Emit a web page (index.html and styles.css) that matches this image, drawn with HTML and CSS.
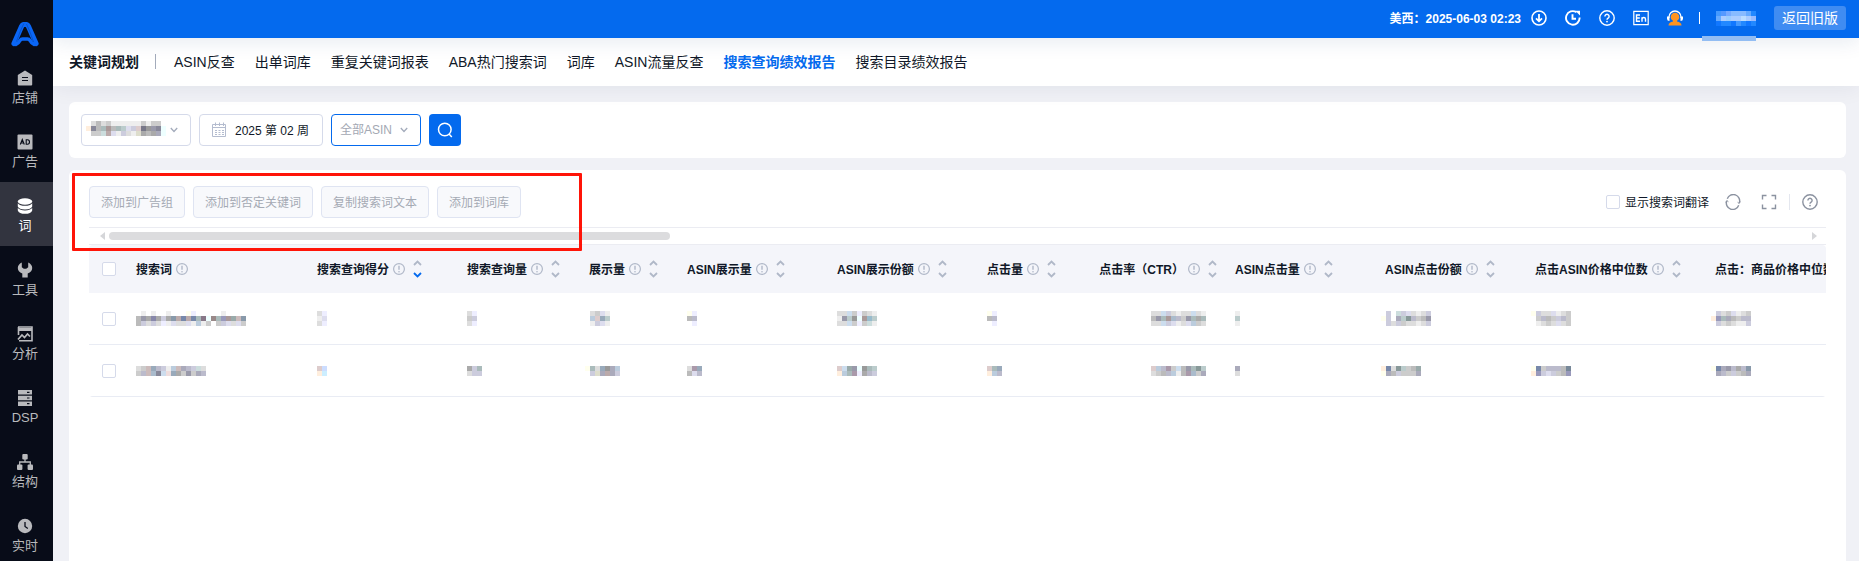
FILE: index.html
```html
<!DOCTYPE html>
<html lang="zh-CN">
<head>
    <meta charset="UTF-8">
    <meta name="viewport" content="width=device-width, initial-scale=1.0">
    <title>搜索查询绩效报告</title>
    <link rel="stylesheet" href="styles.css">
</head>
<body>

<svg class="sprite" aria-hidden="true">
    <symbol id="i-info" viewBox="0 0 12 12">
        <circle cx="6" cy="6" r="5.4" fill="none" stroke="currentColor" stroke-width="1.200"/>
        <path d="M6 2.800v4" stroke="currentColor" stroke-width="1.400"/>
        <circle cx="6" cy="8.700" r=".8" fill="currentColor"/>
    </symbol>
    <symbol id="i-sort" viewBox="0 0 9 18">
        <path class="up" d="M1 5l3.500-3.500L8 5" fill="none" stroke="currentColor" stroke-width="1.800"/>
        <path class="down" d="M1 13l3.500 3.500L8 13" fill="none" stroke="var(--down, currentColor)" stroke-width="1.800"/>
    </symbol>
    <symbol id="i-chevron" viewBox="0 0 8 6">
        <path d="M.8 1L4 4.500L7.200 1" fill="none" stroke="currentColor" stroke-width="1.300"/>
    </symbol>
    <symbol id="i-help" viewBox="0 0 16 16">
        <circle cx="8" cy="8" r="7.200" fill="none" stroke="currentColor" stroke-width="1.400"/>
        <path d="M5.900 6.400a2.100 2.100 0 1 1 3.200 1.800c-.8.500-1.100.8-1.100 1.500" fill="none" stroke="currentColor" stroke-width="1.400"/>
        <circle cx="8" cy="11.600" r=".9" fill="currentColor"/>
    </symbol>
</svg>

<aside class="sidebar">
    <a class="logo" href="#" aria-label="首页">
        <svg width="28" height="25" viewBox="0 0 28 25">
            <path d="M3 21.500L10.500 4.500Q11.500 2.500 13 2.500H15Q16.500 2.500 17.500 4.500L25 21.500" fill="none" stroke="#0a66f5" stroke-width="5.200" stroke-linejoin="round" stroke-linecap="round"/>
            <path d="M5 22.500Q7.500 21.500 9 18.500Q10 17 11.500 17H16.500Q18 17 19 18.500Q20.500 21.500 23 22.500" fill="none" stroke="#0a66f5" stroke-width="3.400" stroke-linecap="round"/>
            <path d="M12.800 1.500Q9 9 5.500 19.500M15.500 2Q19 9 22.500 20" fill="none" stroke="#0649b8" stroke-width=".7"/>
        </svg>
    </a>
    <nav class="menu">
        <a class="menu-item" href="#">
            <svg width="16" height="16" viewBox="0 0 16 16"><path d="M.8 5L8 .5 15.200 5v9.500q0 1-1 1H1.800q-1 0-1-1z" fill="currentColor"/><path d="M5 7.500h6M5 10.500h6" stroke="#080c18" stroke-width="1.200"/></svg>
            <span>店铺</span>
        </a>
        <a class="menu-item" href="#">
            <svg width="16" height="16" viewBox="0 0 16 16"><rect x=".5" y=".5" width="15" height="15" rx="1" fill="currentColor"/><path d="M3.300 10.500L5.300 5.500l2 5M4 9h2.600M9.200 5.800v4.400h1.300q2 0 2-2.200t-2-2.200z" fill="none" stroke="#080c18" stroke-width="1.100"/></svg>
            <span>广告</span>
        </a>
        <a class="menu-item active" href="#">
            <svg width="16" height="16" viewBox="0 0 16 16"><ellipse cx="8" cy="3.500" rx="7.200" ry="3.300" fill="currentColor"/><path d="M.8 5.200Q3 7.800 8 7.800t7.200-2.600v3.300Q14 11.400 8 11.400T.8 8.500zM.8 10Q3 12.400 8 12.400t7.200-2.400v2.400Q14 15.800 8 15.800T.8 12.400z" fill="currentColor"/></svg>
            <span>词</span>
        </a>
        <a class="menu-item" href="#">
            <svg width="16" height="16" viewBox="0 0 16 16"><path d="M4.800.5v4.700l2 1.600h2.400l2-1.600V.5q4 2 4 5.500 0 3.500-4.500 5.500v4H5.300v-4Q.8 9.500.8 6q0-3.500 4-5.500z" fill="currentColor"/></svg>
            <span>工具</span>
        </a>
        <a class="menu-item" href="#">
            <svg width="16" height="16" viewBox="0 0 16 16"><path d="M1 1h14v13.800H2M1.500 1v8" fill="none" stroke="currentColor" stroke-width="1.600"/><path d="M1 3.500h14" stroke="currentColor" stroke-width="3"/><path d="M1 13.500l4-4.500 2.500 2.500L10.500 8l2.500 2.500" fill="none" stroke="currentColor" stroke-width="1.700"/></svg>
            <span>分析</span>
        </a>
        <a class="menu-item" href="#">
            <svg width="16" height="16" viewBox="0 0 16 16"><path d="M1 0h14v4.600H1zM1 5.700h14v4.600H1zM1 11.400h14V16H1z" fill="currentColor"/><path d="M10 2.300h2.500M10 8h2.500M10 13.700h2.500" stroke="#080c18" stroke-width="1.200"/></svg>
            <span>DSP</span>
        </a>
        <a class="menu-item" href="#">
            <svg width="16" height="16" viewBox="0 0 16 16"><rect x="5.300" y="0" width="5.400" height="5.500" rx="1" fill="currentColor"/><rect x="0" y="10.500" width="5.400" height="5.500" rx="1" fill="currentColor"/><rect x="10.600" y="10.500" width="5.400" height="5.500" rx="1" fill="currentColor"/><path d="M8 5v3M2.700 11V8h10.600v3" fill="none" stroke="currentColor" stroke-width="1.300"/></svg>
            <span>结构</span>
        </a>
        <a class="menu-item" href="#">
            <svg width="16" height="16" viewBox="0 0 16 16"><circle cx="8" cy="8" r="7.200" fill="currentColor"/><path d="M8 4v4.500l2.800 2" fill="none" stroke="#080c18" stroke-width="1.300"/></svg>
            <span>实时</span>
        </a>
    </nav>
</aside>

<div class="page">
    <header class="topbar">
        <span class="clock">美西：2025-06-03 02:23</span>
        <div class="top-icons">
            <button aria-label="下载">
                <svg width="16" height="16" viewBox="0 0 16 16" fill="none" stroke="#fff" stroke-width="1.600"><circle cx="8" cy="8" r="7"/><path d="M8 4v7M5 8.300l3 3 3-3" stroke-width="1.800"/></svg>
            </button>
            <button aria-label="更新记录">
                <svg width="16" height="16" viewBox="0 0 16 16" fill="none" stroke="#fff" stroke-width="1.900"><path d="M14.600 7.500A6.800 6.800 0 1 1 11.500 2.200"/><path d="M7.500 4.200v4.600h3.500"/><path d="M10.200.8h4.800v4.800z" fill="#fff" stroke="none"/></svg>
            </button>
            <button aria-label="帮助"><svg width="16" height="16"><use href="#i-help"/></svg></button>
            <button aria-label="English">
                <svg width="16" height="16" viewBox="0 0 16 16" fill="none" stroke="#fff" stroke-width="1.200"><path d="M.8 1.300h14.400v13.400H.8z"/><path d="M7 5H3.500v6.300H7M3.500 8H6.800M9 11.800V7.200M9 9q.2-1.500 1.800-1.500T12.500 9v2.800" stroke-width="1.400"/></svg>
            </button>
            <button aria-label="客服">
                <svg width="16" height="16" viewBox="0 0 16 16"><path d="M2 8V7a6 6 0 0 1 12 0v1" fill="none" stroke="#fff" stroke-width="1.300"/><path d="M0 6.500h2.500V11Q0 11 0 8.800zM16 6.500h-2.500V11Q16 11 16 8.800z" fill="#fff"/><circle cx="8" cy="7" r="4.300" fill="#ff9420"/><path d="M6 10h4v1.500q4.500.8 4.500 4h-13q0-3.200 4.500-4z" fill="#ff9420"/></svg>
            </button>
        </div>
        <span class="divider"></span>
        <span class="user"><i class="mosaic" data-px="49f 59f 7af 8bf 8bf 8bf 6af 28f|6af acf 9cf acf acf bdf acf 9bf|17f 28f 28f 17f 49f 28f 17f 28f"></i></span>
        <button class="btn-old">返回旧版</button>
    </header>

    <nav class="tabs">
        <strong class="tabs-title">关键词规划</strong>
        <span class="tabs-line"></span>
        <a href="#">ASIN反查</a>
        <a href="#">出单词库</a>
        <a href="#">重复关键词报表</a>
        <a href="#">ABA热门搜索词</a>
        <a href="#">词库</a>
        <a href="#">ASIN流量反查</a>
        <a class="active" href="#">搜索查询绩效报告</a>
        <a href="#">搜索目录绩效报告</a>
    </nav>

    <main class="content">
        <form class="card filters">
            <div class="field field-shop">
                <select aria-label="店铺"><option></option></select>
                <i class="mosaic" data-px="... ddd bbb ddd ccc eee eee eee eee eee eee ccc eee ccc ccc ...|fed 889 bbb abb a99 bbb abb bcc dde ccd dcc 778 999 99a 889 eff|... ccc ccc cdd baa dde eee ccd ddd eee ddc aaa bbb aaa aab eff"></i>
                <svg class="chevron" width="8" height="6"><use href="#i-chevron"/></svg>
            </div>
            <div class="field field-date">
                <svg class="calendar" width="16" height="16" viewBox="0 0 16 16" fill="none" stroke="#b4bccf"><path d="M1.500 2.500h13v12h-13zM1.500 5.500h13M4.500.5v3.500M8.500.5v3.500M12.500.5v3.500"/><path d="M4 8.500h9M4 10.500h9M4 12.500h9" stroke-dasharray="2 1.500"/></svg>
                <input type="text" value="2025 第 02 周" aria-label="周" readonly>
            </div>
            <div class="field field-asin">
                <select aria-label="ASIN"><option>全部ASIN</option></select>
                <svg class="chevron" width="8" height="6"><use href="#i-chevron"/></svg>
            </div>
            <button class="btn-search" type="button" aria-label="搜索">
                <svg width="16" height="16" viewBox="0 0 16 16" fill="none" stroke="#fff" stroke-width="1.500"><circle cx="7.800" cy="7.500" r="6.300"/><path d="M12 12l2.800 3"/></svg>
            </button>
        </form>

        <section class="card report">
            <div class="toolbar">
                <button disabled>添加到广告组</button>
                <button disabled>添加到否定关键词</button>
                <button disabled>复制搜索词文本</button>
                <button disabled>添加到词库</button>
                <div class="tools">
                    <label class="translate"><input type="checkbox"><span>显示搜索词翻译</span></label>
                    <button class="tool" aria-label="刷新">
                        <svg width="16" height="16" viewBox="0 0 16 16" fill="none" stroke="currentColor" stroke-width="1.400"><path d="M2.300 4.800A6.300 6.300 0 0 1 14.300 9M13.700 11.200A6.300 6.300 0 0 1 1.700 7"/><path d="M.8 8.500l1-2 1.600 1.200M15.200 7.500l-1 2-1.600-1.200" stroke-width="1"/></svg>
                    </button>
                    <button class="tool" aria-label="全屏">
                        <svg width="16" height="16" viewBox="0 0 16 16" fill="none" stroke="currentColor" stroke-width="1.400"><path d="M1.500 5.500v-4h4M10.500 1.500h4v4M14.500 10.500v4h-4M5.500 14.500h-4v-4"/></svg>
                    </button>
                    <span class="tools-line"></span>
                    <button class="tool" aria-label="帮助"><svg width="16" height="16"><use href="#i-help"/></svg></button>
                </div>
            </div>

            <div class="scroller">
                <span class="arrow arrow-left"></span>
                <div class="track"><div class="thumb"></div></div>
                <span class="arrow arrow-right"></span>
            </div>

            <div class="table-wrap">
                <table>
                    <colgroup>
                        <col class="w-check"><col class="w-term"><col class="w-m"><col class="w-122"><col class="w-s"><col class="w-m"><col class="w-m"><col class="w-s"><col class="w-m"><col class="w-m"><col class="w-m"><col class="w-l"><col class="w-xl">
                    </colgroup>
                    <thead>
                        <tr>
                            <th class="check"><input type="checkbox" aria-label="全选"></th>
                            <th><div class="th"><span>搜索词</span><svg class="info"><use href="#i-info"/></svg></div></th>
                            <th><div class="th"><span>搜索查询得分</span><svg class="info"><use href="#i-info"/></svg><svg class="sort desc"><use href="#i-sort"/></svg></div></th>
                            <th><div class="th"><span>搜索查询量</span><svg class="info"><use href="#i-info"/></svg><svg class="sort"><use href="#i-sort"/></svg></div></th>
                            <th><div class="th"><span>展示量</span><svg class="info"><use href="#i-info"/></svg><svg class="sort"><use href="#i-sort"/></svg></div></th>
                            <th><div class="th"><span>ASIN展示量</span><svg class="info"><use href="#i-info"/></svg><svg class="sort"><use href="#i-sort"/></svg></div></th>
                            <th><div class="th"><span>ASIN展示份额</span><svg class="info"><use href="#i-info"/></svg><svg class="sort"><use href="#i-sort"/></svg></div></th>
                            <th><div class="th"><span>点击量</span><svg class="info"><use href="#i-info"/></svg><svg class="sort"><use href="#i-sort"/></svg></div></th>
                            <th class="right"><div class="th"><span>点击率（CTR）</span><svg class="info"><use href="#i-info"/></svg><svg class="sort"><use href="#i-sort"/></svg></div></th>
                            <th><div class="th"><span>ASIN点击量</span><svg class="info"><use href="#i-info"/></svg><svg class="sort"><use href="#i-sort"/></svg></div></th>
                            <th><div class="th"><span>ASIN点击份额</span><svg class="info"><use href="#i-info"/></svg><svg class="sort"><use href="#i-sort"/></svg></div></th>
                            <th><div class="th"><span>点击ASIN价格中位数</span><svg class="info"><use href="#i-info"/></svg><svg class="sort"><use href="#i-sort"/></svg></div></th>
                            <th><div class="th"><span>点击：商品价格中位数</span><svg class="info"><use href="#i-info"/></svg><svg class="sort"><use href="#i-sort"/></svg></div></th>
                        </tr>
                    </thead>
                    <tbody>
                        <tr>
                            <td class="check"><input type="checkbox" aria-label="选择第1行"></td>
                            <td><i class="mosaic" data-px="... eee ... eee ... ... eee ... ... ... ffe eef ... ... ... ... ... eee ... ... ... ...|bbb 99a aaa 88a aaa ccd aaa 89a baa 78a baa 78a abb 878 eff 988 abb 99b a99 9aa cbb 89a|bbb ccd ddd ccd ddd eef eee dde ddd ddd dde eee bcd eee ccc ... ccc ccd dde ddd dde ccc cdd"></i></td>
                            <td><i class="mosaic" data-px="ddd eef|eee dde|ddd eef"></i></td>
                            <td><i class="mosaic" data-px="ddd eef|ccc ccd|ddd eef"></i></td>
                            <td><i class="mosaic lead" data-px="... ddd ccc dde eee|fff bcd dcc 9ab bcc|... eee ccd dde eee"></i></td>
                            <td><i class="mosaic" data-px="ffe eef|bbb bbc|fff eef"></i></td>
                            <td><i class="mosaic" data-px="ddd ddd cde ccc eef ccc ddd eee|eee 99a bcc 999 eff a99 9bc bcc|ddd ddd cde ccc eef ccc cdd eee"></i></td>
                            <td><i class="mosaic" data-px="ffe eef|bbb bbc|fff eef"></i></td>
                            <td class="right"><i class="mosaic" data-px="ddd ddd cde ccd ddd eee ddd ddd cde ddd eee|bbb 99a abb a99 abc bbc ccc 99a abb aaa abb|ddd ddd cde ccd dde eee ddd dde bcd ccc ddd"></i></td>
                            <td><i class="mosaic" data-px="eee|bcc|eee"></i></td>
                            <td><i class="mosaic lead" data-px="... ccd ... cdd ccd dde ddd eee ddd ccd|ffe ccd fff aab bcc 899 bbc ccc bbb 99a|... ccd ddd ccd ccc ddd ddd eee ddd ccd"></i></td>
                            <td><i class="mosaic lead" data-px="ffe ccd ddd ddd dde eee ddd ccc|... ccc bbc bbb ccc ccd bbc ccc|... eee ddd ccc ddd dde ddd ccc"></i></td>
                            <td><i class="mosaic lead" data-px="... ccd ddd ccc dde eee ddd ccc|fed 99b abb aab bbb ccc bbc bbc|... ccd ddd ccc ddd eee eee ccd"></i></td>
                        </tr>
                        <tr>
                            <td class="check"><input type="checkbox" aria-label="选择第2行"></td>
                            <td><i class="mosaic" data-px="ddd ccc cbb 9ab bbc ccd eee bcd cbb aab bbc ccd cdd ddd|ccc bbc cbb abc 889 cde edd 9ab aaa ccc 99a ccc aab bbc"></i></td>
                            <td><i class="mosaic" data-px="dcc cdf|fed cef"></i></td>
                            <td><i class="mosaic" data-px="aaa ccd abb|ddd ccd ccd"></i></td>
                            <td><i class="mosaic lead" data-px="ffe abb ddd 9ab 999 aab bcd|... ccd ddc aab baa aab ccd"></i></td>
                            <td><i class="mosaic" data-px="ddd a9a 9ab|bbb dde bbc"></i></td>
                            <td><i class="mosaic" data-px="dcc cde 9aa 99a eff 999 abb bcc|fed bcd abb a9a eef aaa bbc ccd"></i></td>
                            <td><i class="mosaic" data-px="dcc abb 9ab|fed bcd bbc"></i></td>
                            <td class="right"><i class="mosaic" data-px="dcc bcd bbc a9a ccc cde bbb 99a abb 899 bcc|ddd ccc bbb bbc bcd eee bbb a9a abc ccc aab"></i></td>
                            <td><i class="mosaic" data-px="aab|ddd"></i></td>
                            <td><i class="mosaic lead" data-px="fed 78a ddd 899 bcc ccc bbb 9aa|ffe aab bbb ccd ccc ccc ccc aab"></i></td>
                            <td><i class="mosaic lead" data-px="ffe 78a ccc bbc bbc bbc bbb 789|fed 99b ccd dde ccd ccc bbb 99b"></i></td>
                            <td><i class="mosaic lead" data-px="ffe 78a aab 99a bbc aaa bbc 89a|... aab bbc ccc ccd ccc bbb aab"></i></td>
                        </tr>
                    </tbody>
                </table>
            </div>
            <div class="highlight"></div>
        </section>
    </main>
</div>

<script src="script.js"></script>
</body>
</html>
```

FILE: styles.css
```css
* { box-sizing: border-box; }
body {
    margin: 0;
    display: flex;
    height: 100vh;
    overflow: hidden;
    background: #f0f1f6;
    color: #101828;
    font-family: "Liberation Sans", "Noto Sans CJK SC", sans-serif;
    font-size: 12px;
}
a { color: inherit; text-decoration: none; }
button, input, select { font: inherit; color: inherit; }
button { padding: 0; border: none; background: none; cursor: pointer; }
svg { display: block; flex: none; }
.sprite { display: none; }
.mosaic { display: block; flex: none; }

/* sidebar */
.sidebar {
    flex: none;
    width: 53px;
    background: #080c18;
    color: #b9babd;
    position: relative;
    z-index: 3;
}
.logo {
    display: flex;
    height: 54px;
    padding: 22px 0 0 11px;
}
.menu-item {
    display: flex;
    flex-direction: column;
    align-items: center;
    gap: 4px;
    height: 64px;
    padding: 16px 3px 0 0;
    font-size: 13px;
    line-height: 16px;
}
.menu-item.active { background: #32343f; color: #fff; }

/* top bar */
.page {
    flex: 1;
    min-width: 0;
    display: flex;
    flex-direction: column;
}
.topbar {
    display: flex;
    flex: none;
    align-items: center;
    height: 38px;
    padding: 0 13px 2px 0;
    background: #046aee;
    color: #fff;
    box-shadow: 0 4px 20px rgba(20, 60, 120, 0.1);
    position: relative;
    z-index: 2;
}
.clock { margin-left: auto; padding-bottom: 2px; font-weight: bold; }
.top-icons { display: flex; gap: 18px; margin-left: 10px; }
.divider { width: 1px; height: 12px; margin-left: 16px; background: #fff; }
.user { margin-left: 16px; position: relative; }
.user::after {
    content: "";
    position: absolute;
    left: -14px;
    right: 0;
    top: 25px;
    height: 5px;
    background: #93bdf3;
}
.btn-old {
    height: 24px;
    margin-left: 18px;
    padding: 0 8px;
    border-radius: 3px;
    background: #3f8cf2;
    font-size: 14px;
    line-height: 24px;
}

/* tabs */
.tabs {
    display: flex;
    flex: none;
    align-items: center;
    gap: 20px;
    height: 48px;
    padding: 0 16px 2px;
    background: #fff;
    font-size: 14px;
    white-space: nowrap;
    box-shadow: 0 4px 20px rgba(20, 30, 60, 0.06);
    position: relative;
    z-index: 1;
}
.tabs-line { width: 1px; height: 15px; margin: 0 -2px 0 -4px; background: #a3abbb; }
.tabs .active { color: #046aee; font-weight: bold; }

/* filters */
.content {
    flex: 1;
    display: flex;
    flex-direction: column;
    gap: 12px;
    padding: 16px 13px 0 16px;
    min-height: 0;
}
.card { background: #fff; border-radius: 6px; position: relative; }
.filters { display: flex; gap: 8px; padding: 12px; }
.field { position: relative; height: 32px; }
.field select, .field input {
    appearance: none;
    width: 100%;
    height: 100%;
    border: 1px solid #d5daea;
    border-radius: 4px;
    background: #fff;
    outline: none;
}
.field-shop { width: 110px; }
.field-shop .mosaic { position: absolute; left: 5px; top: 7px; }
.chevron { position: absolute; right: 13px; top: 13px; color: #a3abbb; }
.field-date { width: 124px; }
.field-date input { padding: 0 0 2px 35px; }
.calendar { position: absolute; left: 12px; top: 8px; }
.field-asin { width: 90px; }
.field-asin select { border-color: #046aee; padding: 0 8px; color: #a3a8b3; }
.btn-search {
    display: flex;
    align-items: center;
    justify-content: center;
    width: 32px;
    height: 32px;
    border-radius: 4px;
    background: #046aee;
}

/* report */
.report { flex: 1; padding: 16px 20px 0; border-radius: 6px 6px 0 0; }
.toolbar { display: flex; align-items: center; gap: 8px; padding-bottom: 9px; }
.toolbar > button {
    height: 32px;
    padding: 0 11px 2px;
    border: 1px solid #dfe4f2;
    border-radius: 4px;
    background: #f8f9fc;
    color: #a5aab4;
}
.tools { display: flex; align-items: center; margin-left: auto; padding-right: 8px; color: #8b92a0; }
.translate { display: flex; align-items: center; gap: 5px; margin-right: 16px; color: #101828; }
.translate span { padding-bottom: 2px; }
input[type="checkbox"] {
    appearance: none;
    display: block;
    width: 14px;
    height: 14px;
    margin: 0;
    border: 1px solid #d5daea;
    border-radius: 2px;
    background: #fff;
}
.tool + .tool { margin-left: 20px; }
.tools-line { width: 1px; height: 16px; margin: 0 12px; background: #e4e7ef; }

.scroller {
    display: flex;
    align-items: center;
    gap: 4px;
    height: 18px;
    padding: 0 9px 0 11px;
    border: solid #ebecf2;
    border-width: 1px 0;
}
.track { flex: 1; }
.thumb { width: 33%; height: 8px; border-radius: 4px; background: #dcdcde; }
.arrow { border: solid transparent; border-width: 4px 0; }
.arrow-left { border-right: 5px solid #d5d6d9; }
.arrow-right { border-left: 5px solid #d5d6d9; }

.table-wrap { overflow: hidden; border-radius: 4px; }
table { width: 1816px; table-layout: fixed; border-spacing: 0; }
.w-check { width: 37px; }
.w-term { width: 181px; }
.w-s { width: 98px; }
.w-122 { width: 122px; }
.w-m { width: 150px; }
.w-l { width: 180px; }
.w-xl { width: 200px; }
th, td { padding: 0 8px 0 10px; text-align: left; }
th { height: 48px; background: #f4f5fa; white-space: nowrap; }
td { height: 52px; border-bottom: 1px solid #e9ecf4; }
.check { padding: 0 0 0 13px; }
.th { display: flex; align-items: center; }
.th span { padding-bottom: 2px; }
.info { width: 12px; height: 12px; margin-left: 4px; color: #b0b8c8; }
.sort { width: 9px; height: 18px; margin-left: 8px; color: #b0b8c8; }
.sort.desc { --down: #046aee; }
.right .th { justify-content: flex-end; }
td.right { padding-right: 19px; }
.right .mosaic { display: flex; justify-content: flex-end; }
.lead { margin-left: -4px; }

/* callout frame */
.highlight {
    position: absolute;
    left: 3px;
    top: 3px;
    width: 510px;
    height: 78px;
    border: 3px solid #ff1408;
    border-radius: 1px;
    pointer-events: none;
}
```

FILE: script.js
```javascript
// each .mosaic lists its rows of colours, "..." is an empty cell
const SIZE = 5;

document.querySelectorAll('.mosaic').forEach(el => {
    const rows = el.dataset.px.split('|').map(row => row.split(' '));
    let rects = '';
    rows.forEach((row, y) => {
        row.forEach((color, x) => {
            if (color === '...') return;
            rects += `<rect x="${x * SIZE}" y="${y * SIZE}" width="${SIZE}" height="${SIZE}" fill="#${color}"/>`;
        });
    });
    const w = rows[0].length * SIZE;
    const h = rows.length * SIZE;
    el.innerHTML = `<svg width="${w}" height="${h}" shape-rendering="crispEdges">${rects}</svg>`;
});
```
